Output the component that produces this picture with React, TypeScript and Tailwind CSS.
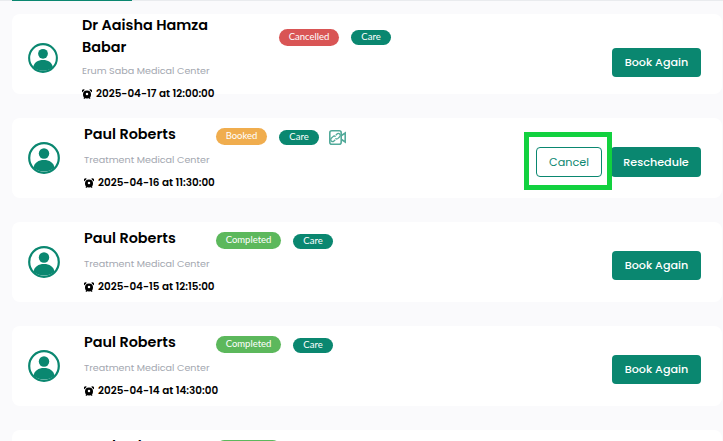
type Visit = {
  name: string
  center: string
  date: string
  status: string
  statusClass: string
}

const visits: Visit[] = [
  {
    name: 'Paul Roberts',
    center: 'Treatment Medical Center',
    date: '2025-04-15 at 12:15:00',
    status: 'Completed',
    statusClass: 'w-[65px] bg-[#5cb85c]',
  },
  {
    name: 'Paul Roberts',
    center: 'Treatment Medical Center',
    date: '2025-04-14 at 14:30:00',
    status: 'Completed',
    statusClass: 'w-[65px] bg-[#5cb85c]',
  },
]

function Avatar({ small }: { small?: boolean }) {
  return (
    <svg viewBox="0 0 32 32" className={small ? 'h-[30px] w-[30px]' : 'h-8 w-8'}>
      <circle cx="16" cy="16" r="14.8" fill="none" stroke="#0a8770" strokeWidth="2.2" />
      <circle cx="16" cy="11.5" r="5.2" fill="#0a8770" />
      <path d="M5.5 25.5C6.5 20.5 10.5 18 16 18s9.500 2.500 10.500 7.500C24 28.300 20.500 29.500 16 29.500S8 28.300 5.500 25.500Z" fill="#0a8770" />
    </svg>
  )
}

function Pill({ label, className }: { label: string; className: string }) {
  return (
    <span className={`flex items-center justify-center rounded-full font-['Lato',sans-serif] text-[9.5px] font-normal text-white ${className}`}>
      {label}
    </span>
  )
}

function CareBadge() {
  return <Pill label="Care" className="h-[15px] w-10 bg-[#0a8770]" />
}

function VideoIcon() {
  return (
    <svg viewBox="0 0 17 15" className="-ml-[2px] h-[15px] w-[17px] opacity-70" fill="none" stroke="#0a8770">
      <rect x="0.8" y="0.8" width="11.4" height="13.4" rx="2" strokeWidth="1.6" />
      <path d="M12.5 5.500 16.200 3v9l-3.700-2.500" strokeWidth="1.600" />
      <path d="M6.800 5.200 8 4a1.900 1.900 0 0 1 2.700 2.700L9 8.400a1.900 1.900 0 0 1-2.600 0" strokeWidth="1.300" />
      <path d="M6.300 9.800 5 11a1.900 1.900 0 0 1-2.700-2.700L4 6.600a1.900 1.900 0 0 1 2.600 0" strokeWidth="1.300" />
    </svg>
  )
}

function AlarmIcon() {
  return (
    <svg viewBox="0 0 12 12" className="h-[10px] w-[10px] shrink-0">
      <path d="M0.400 4 3.400 0.900A2 2 0 0 0 0.400 4ZM11.600 4 8.600 0.900a2 2 0 0 1 3 3.100Z" fill="#000" />
      <path d="M2.400 11.600 3.400 10M9.600 11.600 8.600 10" stroke="#000" strokeWidth="1.400" />
      <circle cx="6" cy="6.500" r="4.800" fill="#000" />
      <circle cx="6" cy="6" r="1.500" fill="#fff" />
    </svg>
  )
}

function DateLine({ date, className }: { date: string; className: string }) {
  return (
    <div className={`flex items-center gap-[4px] whitespace-nowrap text-[10.4px] font-semibold leading-4 text-black ${className}`}>
      <AlarmIcon />
      <span>{date}</span>
    </div>
  )
}

function ActionButton({ label, className }: { label: string; className: string }) {
  return (
    <button className={`flex items-center justify-center rounded-[4px] bg-[#0a8770] text-[11.2px] font-medium text-white ${className}`}>
      {label}
    </button>
  )
}

function VisitCard({ visit }: { visit: Visit }) {
  return (
    <div className="flex h-20 rounded-[8px] bg-white pl-4 pr-[21px]">
      <div className="mt-[24px]">
        <Avatar />
      </div>
      <div className="ml-6 mt-[5px] w-[132px]">
        <p className="text-[14.4px] font-semibold leading-[22px] text-black">{visit.name}</p>
        <p className="mt-[7px] whitespace-nowrap text-[9.6px] leading-4 text-[#a3a7b0]">{visit.center}</p>
        <DateLine date={visit.date} className="mt-[7px]" />
      </div>
      <div className="mt-[10px] flex h-[17px] items-end gap-3">
        <Pill label={visit.status} className={`h-[17px] ${visit.statusClass}`} />
        <CareBadge />
      </div>
      <div className="ml-auto mt-[29px]">
        <ActionButton label="Book Again" className="h-[29px] w-[89px]" />
      </div>
    </div>
  )
}

export default function App() {
  return (
    <div className="h-[441px] overflow-hidden bg-[#fafafc] font-['Poppins','Inter',sans-serif]">
      <div className="h-px bg-[#e9ebee]">
        <div className="ml-3 h-px w-[120px] bg-[#0a8770]" />
      </div>
      <div className="flex flex-col gap-6 pb-6 pl-3 pr-px pt-[13px]">
        <div className="flex h-20 rounded-[8px] bg-white pl-4 pr-[21px]">
          <div className="mt-[29px]">
            <Avatar small />
          </div>
          <div className="ml-[24px] w-[197px]">
            <p className="text-[14.4px] font-semibold leading-[22px] text-black">
              Dr Aaisha Hamza
              <br />
              Babar
            </p>
            <p className="mt-[5px] whitespace-nowrap text-[9.6px] leading-4 text-[#a3a7b0]">Erum Saba Medical Center</p>
            <DateLine date="2025-04-17 at 12:00:00" className="mt-[7px]" />
          </div>
          <div className="mt-[15px] flex h-[17px] items-center gap-3">
            <Pill label="Cancelled" className="h-[17px] w-[60px] bg-[#d95555]" />
            <CareBadge />
          </div>
          <div className="ml-auto mt-[34px]">
            <ActionButton label="Book Again" className="h-[29px] w-[89px]" />
          </div>
        </div>

        <div className="flex h-20 rounded-[8px] bg-white pl-4 pr-[21px]">
          <div className="mt-[24px]">
            <Avatar />
          </div>
          <div className="ml-6 mt-[5px] w-[132px]">
            <p className="text-[14.4px] font-semibold leading-[22px] text-black">Paul Roberts</p>
            <p className="mt-[7px] whitespace-nowrap text-[9.6px] leading-4 text-[#a3a7b0]">Treatment Medical Center</p>
            <DateLine date="2025-04-16 at 11:30:00" className="mt-[7px]" />
          </div>
          <div className="mt-[10px] flex h-[17px] items-end gap-3">
            <Pill label="Booked" className="h-[17px] w-[51px] bg-[#f0ad4e]" />
            <CareBadge />
            <VideoIcon />
          </div>
          <div className="ml-auto mt-[29px] flex h-[30px] gap-[9px]">
            <div className="relative flex w-[66px] items-center justify-center rounded-[4px] border border-[#0a8770] text-[11.2px] text-[#0a8770]">
              Cancel
              <div className="absolute -bottom-[14px] -left-[13px] -right-[11px] -top-[16px] border-[5px] border-[#12d13f]" />
            </div>
            <ActionButton label="Reschedule" className="w-[90px]" />
          </div>
        </div>

        {visits.map((visit) => (
          <VisitCard key={visit.date} visit={visit} />
        ))}

        <div className="flex h-20 rounded-[8px] bg-white pl-4">
          <div className="ml-[56px] mt-[5px] w-[132px] text-[14.4px] font-semibold leading-[22px] text-black">
            Paul Roberts
          </div>
          <div className="mt-[10px] h-[17px] w-[65px] rounded-full bg-[#5cb85c]" />
        </div>
      </div>
    </div>
  )
}
